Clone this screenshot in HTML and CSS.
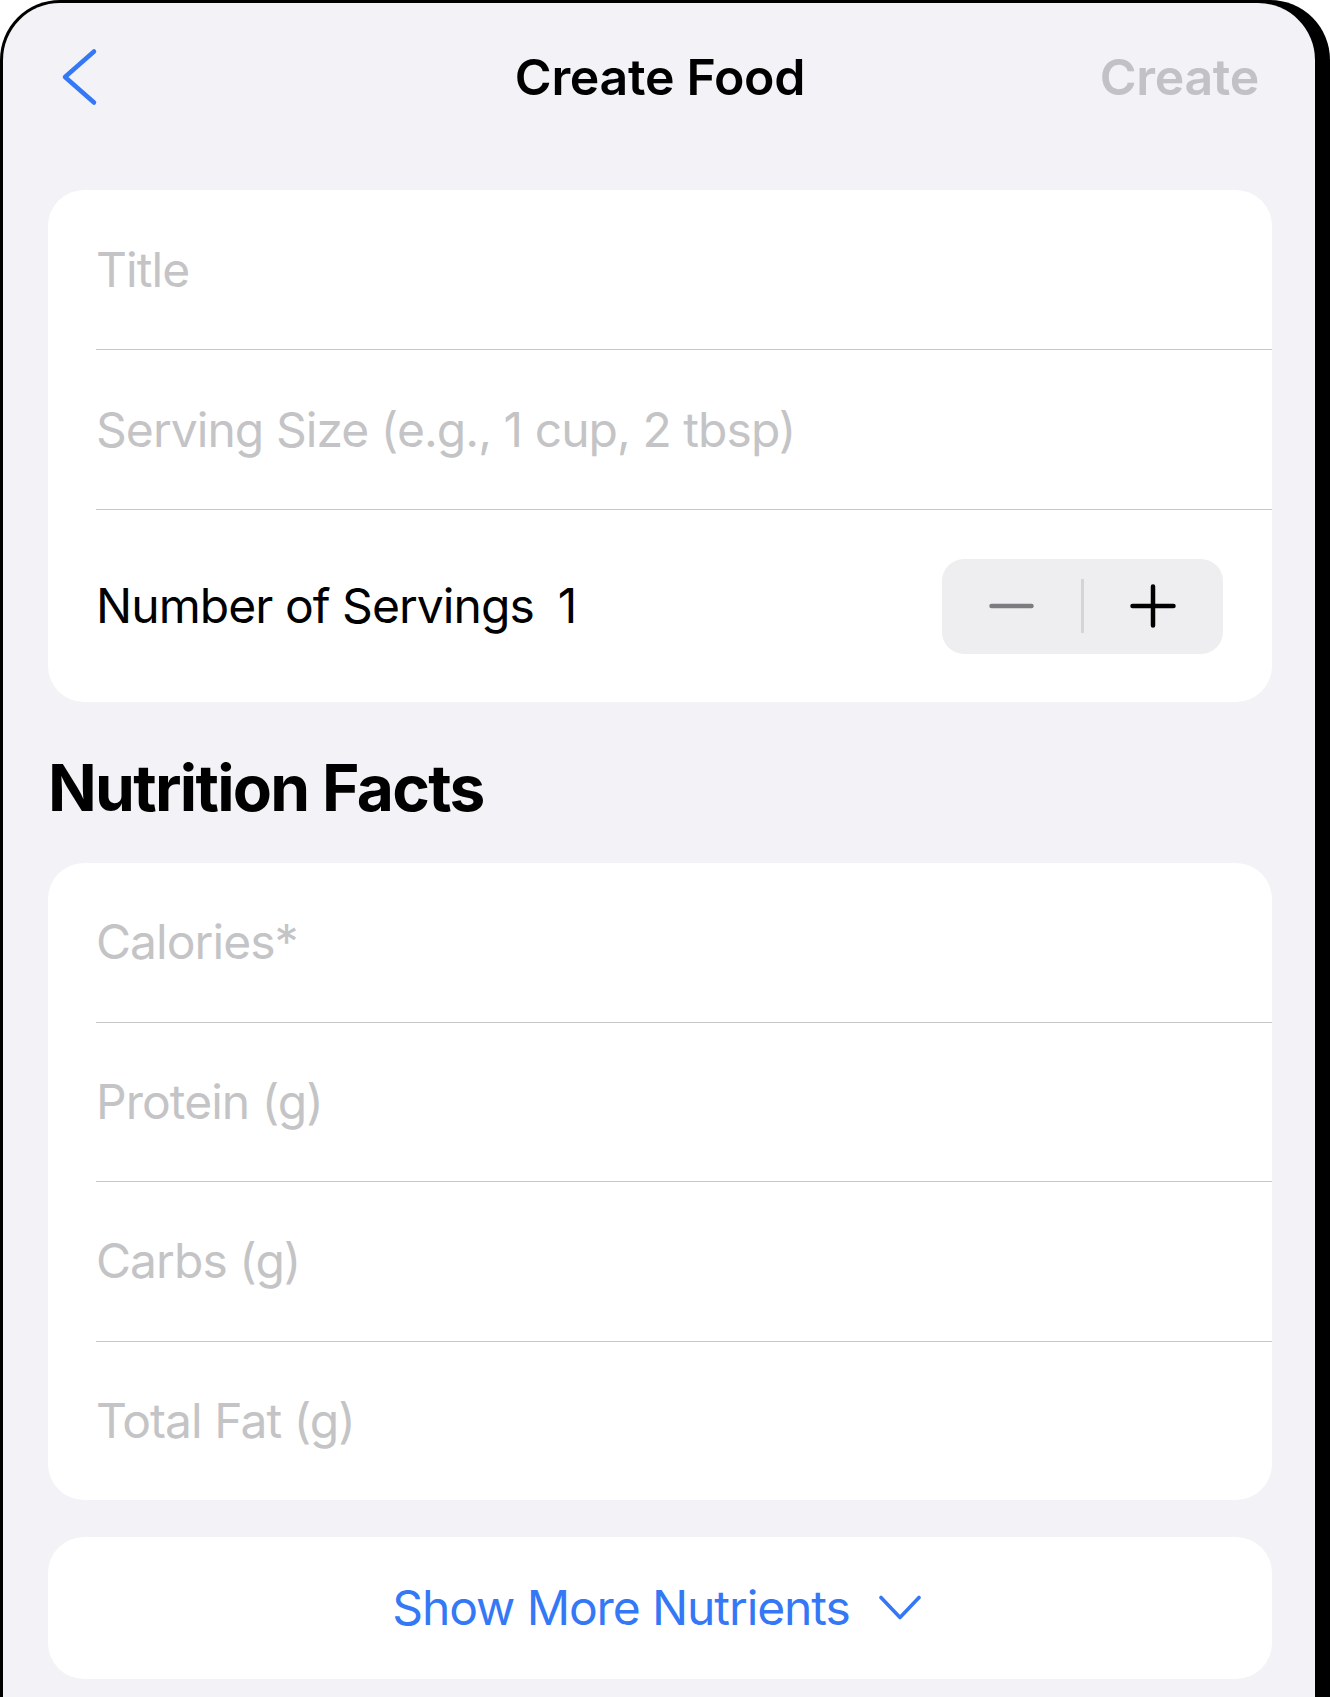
FILE: index.html
```html
<!DOCTYPE html>
<html lang="en">
<head>
<meta charset="utf-8">
<title>Create Food</title>
<link rel="stylesheet" href="styles.css">
</head>
<body>
<div class="device">
  <header class="nav">
    <button class="back" aria-label="Back">
      <svg class="back-icon" viewBox="0 0 40 60" width="40" height="60"><path d="M33 4.5 L4 30 L33 55.5" fill="none" stroke="#3478f6" stroke-width="4.5" stroke-linecap="round" stroke-linejoin="round"/></svg>
    </button>
    <h1 class="nav-title">Create Food</h1>
    <span class="nav-action">Create</span>
  </header>
  <main class="content">
    <section class="card">
      <div class="row"><span class="placeholder">Title</span></div>
      <div class="row"><span class="placeholder">Serving Size (e.g., 1 cup, 2 tbsp)</span></div>
      <div class="row row-stepper">
        <div class="servings"><span>Number of Servings</span><span>1</span></div>
        <div class="stepper">
          <span class="step">
            <svg viewBox="0 0 45 8" width="45" height="8"><path d="M2.5 4 H42.5" stroke="#7b7b80" stroke-width="4.5" stroke-linecap="round"/></svg>
          </span>
          <span class="step-divider"></span>
          <span class="step">
            <svg viewBox="0 0 46 44" width="46" height="44"><path d="M2.5 22 H43.5 M23 2.5 V41.5" stroke="#000" stroke-width="4.5" stroke-linecap="round"/></svg>
          </span>
        </div>
      </div>
    </section>
    <h2 class="section-title">Nutrition Facts</h2>
    <section class="card">
      <div class="row row-n"><span class="placeholder">Calories*</span></div>
      <div class="row row-n"><span class="placeholder">Protein (g)</span></div>
      <div class="row row-n"><span class="placeholder">Carbs (g)</span></div>
      <div class="row row-n"><span class="placeholder">Total Fat (g)</span></div>
    </section>
    <button class="card more">
      <span>Show More Nutrients</span>
      <svg viewBox="0 0 42 26" width="42" height="26"><path d="M2 2.5 L21 22.5 L40 2.5" fill="none" stroke="#3478f6" stroke-width="3.6" stroke-linecap="round" stroke-linejoin="round"/></svg>
    </button>
  </main>
</div>
</body>
</html>
```

FILE: styles.css
```css
html, body {
  margin: 0;
  padding: 0;
}
body {
  background: #ffffff;
  height: 1697px;
  overflow: hidden;
  font-family: Inter, "Noto Sans", "Liberation Sans", sans-serif;
  color: #000;
}
.device {
  box-sizing: border-box;
  width: 1318px;
  height: 1697px;
  border: 3px solid #000;
  border-bottom: none;
  border-radius: 60px 60px 0 0;
  background: #f2f2f7;
  box-shadow: 12px 0 0 #000;
}
.nav {
  height: 147px;
  display: grid;
  grid-template-columns: 1fr auto 1fr;
  align-items: center;
  padding: 0 56px 0 58px;
}
.back {
  justify-self: start;
  background: none;
  border: none;
  padding: 0;
  margin: 0;
  display: flex;
}
.nav-title {
  margin: 0;
  font-size: 50px;
  font-weight: 600;
  line-height: 1;
  letter-spacing: -0.3px;
}
.nav-action {
  justify-self: end;
  font-size: 50px;
  font-weight: 600;
  line-height: 1;
  color: #c1c1c6;
  letter-spacing: -0.3px;
}
.content {
  padding: 40px 43px 0 45px;
}
.card {
  background: #fff;
  border-radius: 36px;
  overflow: hidden;
}
.row {
  margin-left: 48px;
  height: 159px;
  border-bottom: 1px solid #c6c6c8;
  display: flex;
  align-items: center;
  font-size: 48px;
  line-height: 1;
  letter-spacing: -0.95px;
}
.row:last-child {
  border-bottom: none;
}
.row-n {
  height: 158.5px;
}
.placeholder {
  color: #c4c4c6;
}
.row-stepper {
  height: 192px;
  padding-right: 49px;
  justify-content: space-between;
}
.servings {
  display: flex;
  gap: 24px;
}
.stepper {
  width: 281px;
  height: 95px;
  background: #eeeef0;
  border-radius: 22px;
  display: flex;
  align-items: center;
}
.step {
  flex: 1;
  height: 100%;
  display: flex;
  align-items: center;
  justify-content: center;
}
.step-divider {
  width: 2.5px;
  height: 54px;
  background: #d3d3d8;
}
.section-title {
  margin: 54px 0 43px 0;
  font-size: 64px;
  font-weight: 700;
  line-height: 1;
  letter-spacing: -1.7px;
}
.more {
  margin-top: 37px;
  width: 100%;
  height: 142px;
  border: none;
  display: flex;
  align-items: center;
  justify-content: center;
  gap: 29px;
  font-family: inherit;
  font-size: 48px;
  line-height: 1;
  letter-spacing: -1.1px;
  color: #3478f6;
  padding: 0 7px 0 0;
}
```
